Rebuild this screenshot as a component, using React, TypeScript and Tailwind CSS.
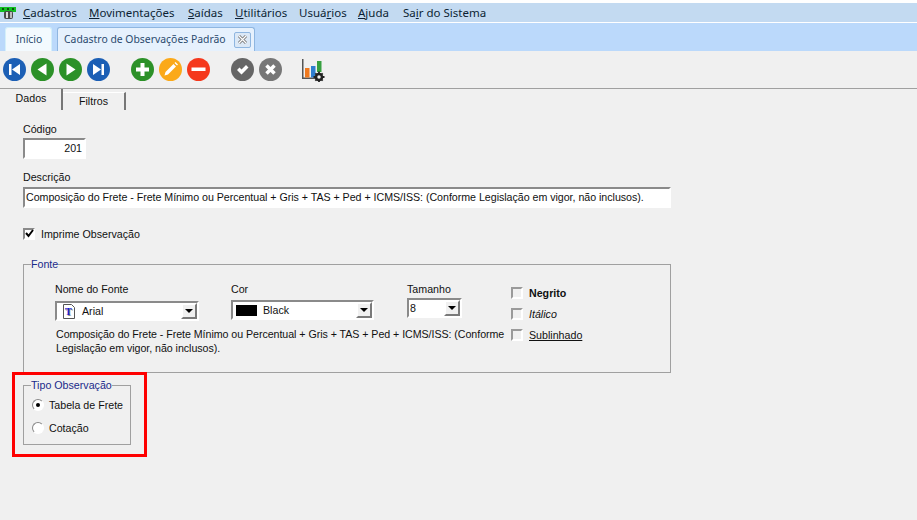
import React from 'react'

const menus = [
  { pre: '', key: 'C', post: 'adastros', w: 'w-[66px]' },
  { pre: '', key: 'M', post: 'ovimentações', w: 'w-[99px]' },
  { pre: '', key: 'S', post: 'aídas', w: 'w-[47px]' },
  { pre: '', key: 'U', post: 'tilitários', w: 'w-[64px]' },
  { pre: 'Usuá', key: 'r', post: 'ios', w: 'w-[59px]' },
  { pre: '', key: 'A', post: 'juda', w: 'w-[45px]' },
  { pre: 'Sa', key: 'i', post: 'r do Sistema', w: 'w-[90px]' },
]

function Round({ color, children }: { color: string; children: React.ReactNode }) {
  return (
    <svg width="23" height="23" viewBox="0 0 23 23" className="shrink-0">
      <circle cx="11.5" cy="11.5" r="11.5" fill={color} />
      {children}
    </svg>
  )
}

function ComboArrow() {
  return (
    <span className="flex h-[16px] w-[16px] shrink-0 items-center justify-center border-2 border-[#7a7a7a] border-t-white border-l-white bg-[#f0f0f0]">
      <span className="h-0 w-0 border-x-[4px] border-t-[4px] border-x-transparent border-t-black" />
    </span>
  )
}

function Sunken({ className, children }: { className: string; children?: React.ReactNode }) {
  return (
    <div className={`border-2 border-[#8a8a8a] border-r-white border-b-white bg-white ${className}`}>
      {children}
    </div>
  )
}

function StyleCheck({ children }: { children: React.ReactNode }) {
  return (
    <div className="flex h-[21px] items-center gap-[6px]">
      <span className="h-[12px] w-[12px] border-2 border-[#9a9a9a] border-r-white border-b-white bg-[#f0f0f0]" />
      {children}
    </div>
  )
}

export default function App() {
  return (
    <div className="h-[520px] w-[917px] overflow-hidden bg-[#f0f0f0] font-['Liberation_Sans',sans-serif] text-[10.67px] text-[#111]">
      <div className="h-[3px] bg-white" />
      <div className="flex h-[20px] items-center border-b border-white bg-[#c3daf1] font-['Noto_Sans',sans-serif] text-[11.5px] text-[#0c1f33]">
        <svg width="19" height="14" viewBox="0 0 19 14" className="mr-[4px] shrink-0">
          <path d="M0 1h16v5H0z" fill="#10c020" />
          <rect x="2" y="2" width="2" height="2" fill="#0a5010" />
          <rect x="7" y="2" width="2" height="2" fill="#0a5010" />
          <rect x="12" y="2" width="2" height="2" fill="#0a5010" />
          <rect x="4" y="5" width="9" height="8" rx="2" fill="#4a4a4a" />
          <rect x="6" y="6" width="2" height="6" fill="#ddd" />
          <rect x="10" y="6" width="2" height="6" fill="#bbb" />
        </svg>
        {menus.map((m) => (
          <span key={m.key + m.post} className={`${m.w} shrink-0 whitespace-nowrap`}>
            {m.pre}
            <span className="underline">{m.key}</span>
            {m.post}
          </span>
        ))}
      </div>
      <div className="flex h-[28px] items-end bg-[#bbd9fb] pl-[5px] font-['Noto_Sans',sans-serif] text-[10.4px] text-[#2a4a6e]">
        <div className="flex h-[24px] w-[47px] items-center justify-center rounded-t-[3px] border border-b-0 border-[#d4f0fa] bg-[#f3fafe] pl-[1px]">
          Início
        </div>
        <div className="ml-[5px] flex h-[24px] w-[198px] items-center justify-between rounded-t-[3px] border border-b-0 border-[#8fb6e0] bg-[#e6f1fd] pl-[6px] pr-[3px]">
          <span className="whitespace-nowrap">Cadastro de Observações Padrão</span>
          <span className="flex h-[16px] w-[17px] items-center justify-center rounded-[2px] border border-[#8fb6e0] bg-[#dbe8f6]">
            <svg width="11" height="11" viewBox="0 0 11 11">
              <path d="M2 2 L9 9 M9 2 L2 9" stroke="#777" strokeWidth="3" />
              <path d="M2 2 L9 9 M9 2 L2 9" stroke="#fff" strokeWidth="1.2" />
            </svg>
          </span>
        </div>
      </div>
      <div className="flex h-[38px] items-center border-b border-[#a0a0a0] pl-[3px]">
        <div className="flex gap-[5px]">
          <Round color="#1c5fb5">
            <path d="M6 6v11h2.500V6zM17 6v11l-8-5.500z" fill="#fff" />
          </Round>
          <Round color="#2c9128">
            <path d="M15.500 5.500v12l-9-6z" fill="#fff" />
          </Round>
          <Round color="#2c9128">
            <path d="M7.500 5.500v12l9-6z" fill="#fff" />
          </Round>
          <Round color="#1c5fb5">
            <path d="M17 6v11h-2.500V6zM6 6v11l8-5.500z" fill="#fff" />
          </Round>
        </div>
        <div className="ml-[21px] flex gap-[5px]">
          <Round color="#2c9128">
            <path d="M9.500 5h4v4.500H18v4h-4.500V18h-4v-4.500H5v-4h4.500z" fill="#fff" />
          </Round>
          <Round color="#fba919">
            <path d="M5.500 17.500l1-3.500 8-8 2.500 2.500-8 8zM15.500 5l1-1 2.500 2.500-1 1z" fill="#fff" />
          </Round>
          <Round color="#f5381c">
            <rect x="4.500" y="9.500" width="14" height="3.500" fill="#fff" />
          </Round>
        </div>
        <div className="ml-[21px] flex gap-[5px]">
          <Round color="#666">
            <path d="M6 12l2.500-2.500 2 2L15 7l2.500 2.500-7 7z" fill="#fff" />
          </Round>
          <Round color="#777">
            <path d="M7.500 7.500l8 8M15.500 7.500l-8 8" stroke="#fff" strokeWidth="3.500" />
          </Round>
        </div>
        <svg width="24" height="24" viewBox="0 0 24 24" className="ml-[20px] shrink-0">
          <path d="M.75 1v19.250H15" stroke="#555" strokeWidth="1.500" fill="none" />
          <rect x="3" y="10" width="4.500" height="9.500" fill="#f07a20" />
          <rect x="9" y="8" width="4.500" height="11.500" fill="#2f7fd0" />
          <rect x="15" y="3" width="4.500" height="11" fill="#37a040" />
          <circle cx="17" cy="19" r="3" fill="none" stroke="#222" strokeWidth="2.500" />
          <path d="M17 13.500v2M17 22.500v2M11.500 19h2M20.500 19h2M13.300 15.300l1.400 1.400M19.300 21.300l1.400 1.400M20.700 15.300l-1.400 1.400M14.700 21.300l-1.400 1.400" stroke="#222" strokeWidth="1.800" />
        </svg>
      </div>
      <div className="flex h-[22px] items-end">
        <div className="mb-[1px] flex h-[21px] w-[63px] items-center justify-center border-r-2 border-r-[#777] pb-[3px] pl-[1px]">Dados</div>
        <div className="mb-[1px] flex h-[18px] w-[63px] items-center justify-center border-t border-r-2 border-t-white border-r-[#777] bg-[#f0f0f0] pb-[1px]">
          Filtros
        </div>
      </div>

      <div className="pl-[23px] pt-[12px]">
        <div className="leading-[13px]">Código</div>
        <Sunken className="mt-[2px] flex h-[21px] w-[63px] items-center justify-end pb-[1px] pr-[2px]">201</Sunken>
        <div className="mt-[12px] leading-[13px]">Descrição</div>
        <Sunken className="mt-[3px] flex h-[21px] w-[648px] items-center whitespace-nowrap pb-[1px] pl-[1px] tracking-[-0.03px]">
          Composição do Frete - Frete Mínimo ou Percentual + Gris + TAS + Ped + ICMS/ISS: (Conforme Legislação em vigor, não inclusos).
        </Sunken>
        <div className="mt-[19px] flex h-[13px] items-center gap-[6px]">
          <span className="flex h-[12px] w-[12px] items-center justify-center border-2 border-[#8a8a8a] border-r-white border-b-white bg-white">
            <svg width="9" height="9" viewBox="0 0 9 9" className="shrink-0">
              <path d="M1 4l2.500 3L8 1" stroke="#000" strokeWidth="2" fill="none" />
            </svg>
          </span>
          Imprime Observação
        </div>

        <fieldset className="mt-[16px] h-[117px] w-[648px] border border-[#a0a0a0]">
          <legend className="ml-[7px] text-[#1a2a8a]">Fonte</legend>
          <div className="pl-[31px] pt-[11px]">
            <div className="flex">
              <div className="w-[176px]">
                <div className="leading-[13px]">Nome do Fonte</div>
                <Sunken className="mt-[5px] flex h-[20px] w-[144px] items-center">
                  <svg width="14" height="15" viewBox="0 0 14 15" className="ml-[5px] shrink-0">
                    <path d="M1.500 .5h8l3 3v11h-11z" fill="#fff" stroke="#555" />
                    <text x="4" y="12" fontSize="10" fontWeight="700" fontFamily="Liberation Serif" fill="#888">T</text>
                    <text x="3" y="11" fontSize="10" fontWeight="700" fontFamily="Liberation Serif" fill="#1a1ad0">T</text>
                  </svg>
                  <span className="ml-[6px] flex-1">Arial</span>
                  <ComboArrow />
                </Sunken>
              </div>
              <div className="w-[176px]">
                <div className="leading-[13px]">Cor</div>
                <Sunken className="mt-[4px] flex h-[20px] w-[143px] items-center">
                  <span className="ml-[3px] h-[11px] w-[21px] shrink-0 bg-black" />
                  <span className="ml-[6px] flex-1">Black</span>
                  <ComboArrow />
                </Sunken>
              </div>
              <div className="w-[104px]">
                <div className="leading-[13px]">Tamanho</div>
                <Sunken className="mt-[2px] flex h-[20px] w-[55px] items-center pl-[1px]">
                  <span className="flex-1">8</span>
                  <ComboArrow />
                </Sunken>
              </div>
              <div className="-mt-[1px]">
                <StyleCheck><span className="font-bold">Negrito</span></StyleCheck>
                <StyleCheck><span className="italic">Itálico</span></StyleCheck>
                <StyleCheck><span className="underline">Sublinhado</span></StyleCheck>
              </div>
            </div>
            <p className="-mt-[18px] ml-[1px] w-[452px] leading-[14px] tracking-[-0.05px]">
              Composição do Frete - Frete Mínimo ou Percentual + Gris + TAS + Ped + ICMS/ISS: (Conforme Legislação em vigor, não inclusos).
            </p>
          </div>
        </fieldset>

        <div className="-ml-[11px] mt-[-1px] h-[85px] w-[135px] border-[3px] border-[#fe0000] pl-[8px] pt-[2px]">
          <fieldset className="h-[68px] w-[108px] border border-[#a0a0a0] pl-[7px]">
            <legend className="text-[#1a2a8a]">Tipo Observação</legend>
            <div className="mt-[5px] ml-[1px] flex h-[14px] items-center gap-[5px]">
              <span className="flex h-[12px] w-[12px] items-center justify-center rounded-full border border-[#888] border-r-white border-b-white bg-white">
                <span className="h-[4px] w-[4px] rounded-full bg-black" />
              </span>
              Tabela de Frete
            </div>
            <div className="mt-[9px] ml-[1px] flex h-[14px] items-center gap-[5px]">
              <span className="h-[12px] w-[12px] rounded-full border border-[#888] border-r-white border-b-white bg-white" />
              Cotação
            </div>
          </fieldset>
        </div>
      </div>
    </div>
  )
}
